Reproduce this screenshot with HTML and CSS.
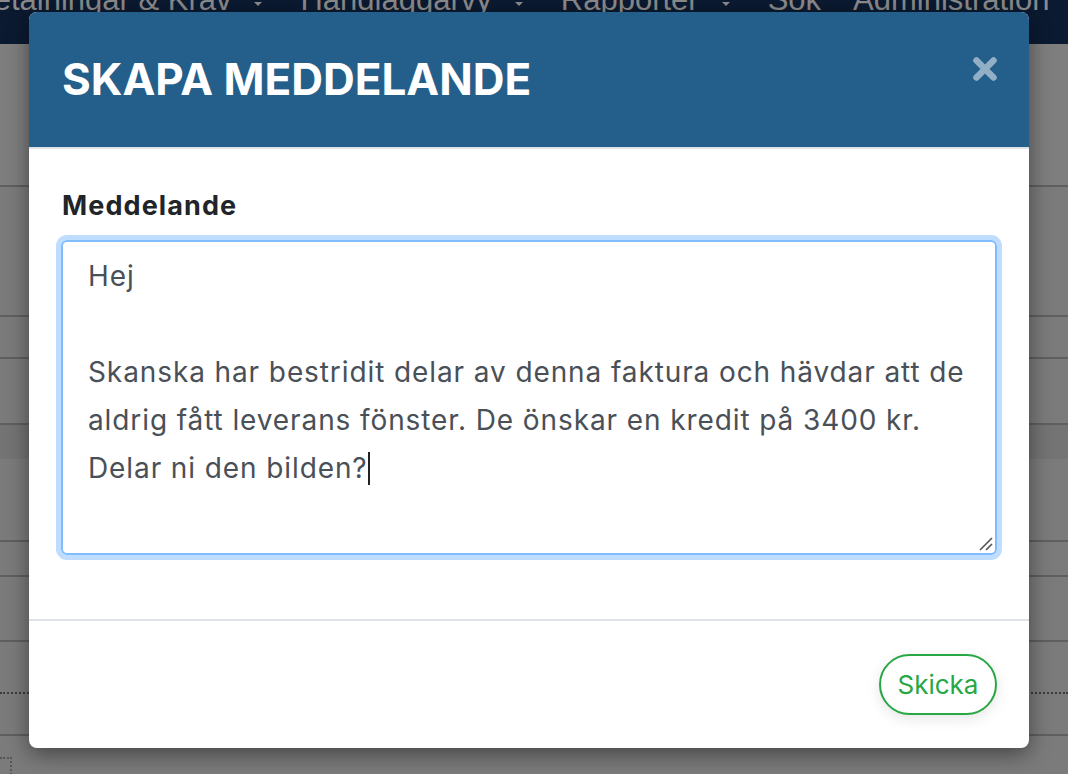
FILE: index.html
```html
<!DOCTYPE html>
<html lang="sv">
<head>
<meta charset="utf-8">
<title>Skapa meddelande</title>
<link rel="stylesheet" href="styles.css">
</head>
<body>
<div class="page">
  <nav class="nav">
    <span class="nav-item first">Betalningar &amp; Krav<span class="caret"></span></span>
    <span class="nav-item">Handläggarvy<span class="caret"></span></span>
    <span class="nav-item">Rapporter<span class="caret"></span></span>
    <span class="nav-item plain">Sök</span>
    <span class="nav-item plain">Administration</span>
  </nav>
  <div class="rows">
    <div class="row r1"></div>
    <div class="row r2"></div>
    <div class="row r3"></div>
    <div class="row r4"></div>
    <div class="row r5 dark"></div>
    <div class="row r6"></div>
    <div class="row r7"></div>
    <div class="row r8"></div>
    <div class="row r9 dotted"></div>
    <div class="row r10"></div>
    <div class="row r11"><div class="corner"></div></div>
  </div>
</div>

<div class="modal" role="dialog" aria-labelledby="modal-title">
  <header class="modal-header">
    <h1 id="modal-title" class="modal-title">SKAPA MEDDELANDE</h1>
    <button class="close" aria-label="Stäng">
      <svg width="26" height="26" viewBox="0 0 26 26" aria-hidden="true">
        <path d="M4.5 4.5 L21.5 21.5 M21.5 4.5 L4.5 21.5" stroke="currentColor" stroke-width="6.5" stroke-linecap="round"/>
      </svg>
    </button>
  </header>
  <div class="modal-body">
    <label class="label">Meddelande</label>
    <div class="textbox" role="textbox" aria-multiline="true">Hej

Skanska har bestridit delar av denna faktura och hävdar att de aldrig fått leverans fönster. De önskar en kredit på 3400 kr. Delar ni den bilden?<span class="cursor"></span><svg class="grip" width="14" height="14" viewBox="0 0 14 14" aria-hidden="true"><path d="M1 13 L13 1 M7 13 L13 7" stroke="#555" stroke-width="1.6"/></svg></div>
  </div>
  <footer class="modal-footer">
    <button class="btn-send">Skicka</button>
  </footer>
</div>
</body>
</html>
```

FILE: styles.css
```css
html, body {
  margin: 0;
  padding: 0;
}
body {
  width: 1068px;
  height: 774px;
  overflow: hidden;
  background: #7a7a7a;
  font-family: Inter, Roboto, "Liberation Sans", sans-serif;
}
.page {
  display: flex;
  flex-direction: column;
  height: 774px;
}
.nav {
  height: 44px;
  flex: none;
  background: #0b1a31;
  display: flex;
  align-items: flex-start;
  overflow: hidden;
  white-space: nowrap;
  font-family: "Liberation Sans", Arial, sans-serif;
  font-size: 31px;
  line-height: 31px;
  color: #8b8b8b;
}
.nav-item {
  display: flex;
  align-items: flex-start;
  margin-top: -16px;
  margin-right: 38px;
}
.nav-item.first {
  margin-left: -27px;
}
.nav-item.plain {
  margin-right: 32px;
}
.caret {
  display: inline-block;
  margin-left: 23px;
  margin-top: 18px;
  width: 0;
  height: 0;
  border-left: 4px solid transparent;
  border-right: 4px solid transparent;
  border-top: 4px solid #8b8b8b;
}
.rows {
  flex: 1;
  display: flex;
  flex-direction: column;
}
.row {
  border-bottom: 2px solid #5f5f5f;
  background: #7b7b7b;
}
.r1 { height: 141px; background: #7e7e7e; }
.r2 { height: 128px; }
.r3 { height: 40px; }
.r4 { height: 64px; }
.r5 { height: 34px; border-bottom: none; }
.r6 { height: 81px; }
.r7 { height: 33px; }
.r8 { height: 63px; }
.r9 { height: 50px; }
.r10 { height: 40px; }
.r11 { flex: 1; border-bottom: none; }
.dark { background: #747474; }
.dotted { border-bottom: 2px dotted #3c3c3c; }
.corner {
  margin-top: 21px;
  width: 10px;
  height: 20px;
  border-top: 2px dotted #555;
  border-right: 2px dotted #555;
}

.modal {
  position: absolute;
  left: 29px;
  top: 12px;
  width: 1000px;
  height: 736px;
  background: #fff;
  border-radius: 8px;
  overflow: hidden;
  display: flex;
  flex-direction: column;
  box-shadow: 0 6px 22px rgba(0, 0, 0, 0.45);
}
.modal-header {
  height: 135px;
  flex: none;
  background: #245f8b;
  border-bottom: 2px solid #dee2e6;
  display: flex;
  align-items: flex-start;
  justify-content: space-between;
  padding: 0 32px 0 33px;
}
.modal-title {
  margin: 0;
  padding-top: 41px;
  font-size: 44px;
  line-height: 52px;
  font-weight: 700;
  color: #fff;
  letter-spacing: 0;
}
.close {
  margin-top: 44px;
  margin-right: -1px;
  padding: 0;
  border: 0;
  background: none;
  color: rgba(255, 255, 255, 0.5);
  width: 26px;
  height: 26px;
  display: flex;
}
.modal-body {
  height: 470px;
  flex: none;
  padding: 0 32px 0 32px;
  box-sizing: border-box;
}
.label {
  display: block;
  margin-top: 40px;
  margin-bottom: -1px;
  font-size: 27px;
  line-height: 34px;
  font-weight: 700;
  letter-spacing: 1.1px;
  color: #212529;
  padding-left: 1px;
}
.textbox {
  position: relative;
  margin-top: 18px;
  height: 315px;
  box-sizing: border-box;
  border: 2px solid #80bdff;
  border-radius: 6px;
  box-shadow: 0 0 0 5px #bfdeff;
  padding: 10px 25px;
  font-size: 28px;
  line-height: 48px;
  letter-spacing: 0.9px;
  color: #495057;
  white-space: pre-wrap;
}
.cursor {
  display: inline-block;
  width: 2px;
  height: 33px;
  background: #222;
  vertical-align: -7px;
  margin-left: 0;
}
.grip {
  position: absolute;
  right: 2px;
  bottom: 2px;
}
.modal-footer {
  flex: 1;
  border-top: 2px solid #dee2e6;
  display: flex;
  justify-content: flex-end;
  align-items: flex-start;
  padding: 0 32px;
}
.btn-send {
  margin-top: 33px;
  width: 118px;
  height: 61px;
  border: 2px solid #28a745;
  border-radius: 31px;
  background: #fff;
  color: #28a745;
  font-family: Inter, Roboto, "Liberation Sans", sans-serif;
  font-size: 26px;
  padding: 0;
  box-shadow: 0 4px 14px rgba(0, 0, 0, 0.1);
}
```
